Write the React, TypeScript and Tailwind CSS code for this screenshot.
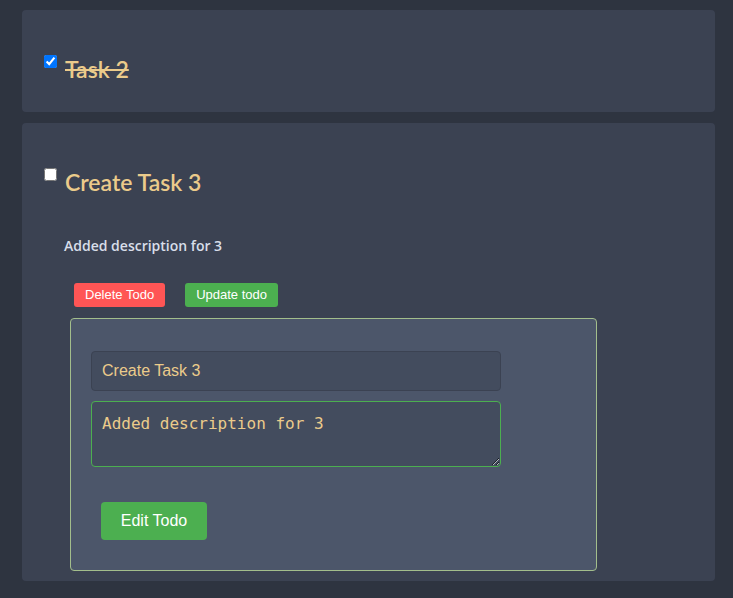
import React from "react";

const todos = [
  { id: 2, title: "Task 2", description: "", done: true },
  { id: 3, title: "Create Task 3", description: "Added description for 3", done: false },
];

export default function App() {
  return (
    <div className="min-h-[598px] bg-[#2e3440] pt-[10px] pb-[18px]" style={{ fontFamily: '"Open Sans", sans-serif' }}>
      {/* done todo */}
      <div className="ml-[22px] w-[693px] h-[102px] rounded-[4px] bg-[#3b4252] px-[22px] pt-[45px]">
        <div className="flex items-start">
          <input type="checkbox" defaultChecked={todos[0].done} className="m-0 w-[13px] h-[13px] shrink-0" />
          <h2 className="ml-[8px] text-[23px] leading-[28px] font-semibold text-[#ebcb8b] line-through" style={{ fontFamily: "Lato, sans-serif" }}>{todos[0].title}</h2>
        </div>
      </div>

      {/* open todo with edit form */}
      <div className="ml-[22px] mt-[11px] w-[693px] h-[458px] rounded-[4px] bg-[#3b4252] px-[22px] pt-[45px]">
        <div className="flex items-start">
          <input type="checkbox" className="m-0 w-[13px] h-[13px] shrink-0" />
          <h2 className="ml-[8px] -mt-[1px] text-[23px] leading-[30px] font-semibold text-[#ebcb8b]" style={{ fontFamily: "Lato, sans-serif" }}>{todos[1].title}</h2>
        </div>
        <p className="ml-[20px] mt-[39px] text-[14px] leading-[20px] font-semibold text-[#d8dee9]">{todos[1].description}</p>
        <div className="ml-[30px] mt-[27px] flex gap-[20px]" style={{ fontFamily: '"Liberation Sans", Arial, sans-serif' }}>
          <button className="h-[24px] px-[11px] rounded-[3px] bg-[#ff5555] text-[13px] text-white">Delete Todo</button>
          <button className="h-[24px] px-[11px] rounded-[3px] bg-[#4caf50] text-[13px] text-white">Update todo</button>
        </div>
        <form className="ml-[26px] mt-[11px] w-[527px] h-[253px] rounded-[4px] border border-[#a3be8c] bg-[#4c566a] px-[20px] pt-[32px]">
          <input
            type="text"
            defaultValue={todos[1].title}
            className="block w-[410px] h-[40px] rounded-[4px] border border-[#3b4252] bg-[#434c5e] px-[10px] text-[16px] text-[#ebcb8b] outline-none"
            style={{ fontFamily: '"Liberation Sans", Arial, sans-serif' }}
          />
          <textarea
            defaultValue={todos[1].description}
            className="block mt-[10px] w-[410px] h-[66px] rounded-[4px] border border-[#4caf50] bg-[#434c5e] px-[10px] pt-[12px] text-[16px] leading-[20px] text-[#ebcb8b] outline-none resize-y"
            style={{ fontFamily: '"DejaVu Sans Mono", monospace' }}
          />
          <button
            type="button"
            className="mt-[35px] ml-[10px] w-[106px] h-[38px] rounded-[4px] bg-[#4caf50] text-[16px] text-white"
            style={{ fontFamily: '"Liberation Sans", Arial, sans-serif' }}
          >
            Edit Todo
          </button>
        </form>
      </div>
    </div>
  );
}
